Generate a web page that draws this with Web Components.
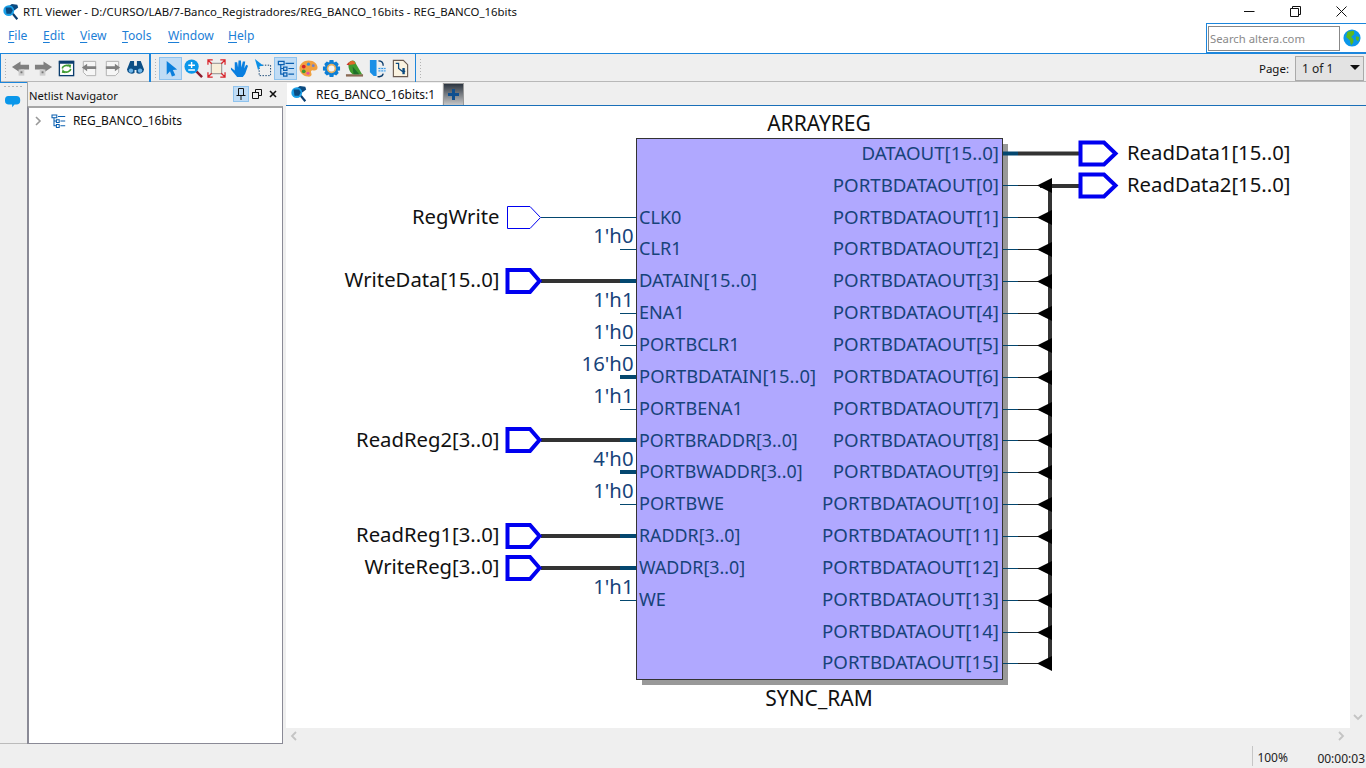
<!DOCTYPE html>
<html>
<head>
<meta charset="utf-8">
<title>RTL Viewer</title>
<style>
html, body { margin: 0; padding: 0; background: #efefef; overflow: hidden; }
body { font-family: "Noto Sans", "Open Sans", sans-serif; }
</style>
</head>
<body>
<rtl-app></rtl-app>
<script>
const ICONS = {
  app: `<path d="M8 3 L11 1 L17 2 L18 5 L14 8 L11 9Z" fill="#0b4a80"/><path d="M12 12 L17 18" stroke="#0b3d6e" stroke-width="2.4"/><circle cx="7.5" cy="8.5" r="6" fill="#1aa0e8"/><path d="M4 5 H10 L12 8 L10 12 H5Z" fill="#0b4a80"/>`,
  back: `<path d="M10 2.5 V6 H19 V11 H10 V14.5 L1 8.5Z" fill="#808080"/><rect x="8" y="11" width="6" height="6.5" fill="#cdcdcd"/><rect x="10" y="13" width="2" height="2" fill="#777"/>`,
  forward: `<path d="M10 2.5 V6 H1 V11 H10 V14.5 L19 8.5Z" fill="#808080"/><rect x="6" y="11" width="6" height="6.5" fill="#cdcdcd"/><rect x="8" y="13" width="2" height="2" fill="#777"/>`,
  refresh: `<rect x="2.5" y="2.5" width="15" height="15" fill="#fff" stroke="#0b3d6e" stroke-width="1.4"/><rect x="2" y="2" width="16" height="3" fill="#0b3d6e"/><path d="M5.5 10 A4.5 4 0 0 1 12.5 7.5 M14.5 10.5 A4.5 4 0 0 1 7.5 13" fill="none" stroke="#3f9b2f" stroke-width="1.7"/><path d="M11 5.5 L15 6 L14 10Z M9 15 L5 14.5 L6 10.5Z" fill="#3f9b2f"/>`,
  docleft: `<path d="M3.5 2.5 H16.5 V17.5 H7 L3.5 14Z" fill="#f6f6f6" stroke="#b0b0b0"/><path d="M2 9 L7.5 5 V7.5 H17 V10.5 H7.5 V13Z" fill="#808080"/>`,
  docright: `<path d="M3.5 2.5 H16.5 V14 L13 17.5 H3.5Z" fill="#f6f6f6" stroke="#b0b0b0"/><path d="M18 9 L12.5 5 V7.5 H3 V10.5 H12.5 V13Z" fill="#808080"/>`,
  binoculars: `<path d="M4.5 2 H8.5 V7 H11.5 V2 H15.5 L19 11 A5 5 0 0 1 11 14.5 V11.5 H9 V14.5 A5 5 0 0 1 1 11Z" fill="#0c4f86"/><circle cx="5.2" cy="12.2" r="2.3" fill="#6fb6ea"/><circle cx="14.8" cy="12.2" r="2.3" fill="#6fb6ea"/>`,
  select: `<path d="M6 2 L17 11 L12.5 11.5 L15 17 L11.5 18.5 L9.5 13 L6 16.5Z" fill="#0a7fdc"/>`,
  zoom: `<path d="M12 12 L19 19" stroke="#8c1c2c" stroke-width="2.6"/><circle cx="8" cy="8" r="7.5" fill="#0a97ea"/><path d="M4.5 6.5 H11.5 M8 3.2 V9.5 M4.5 11.5 H11.5" stroke="#fff" stroke-width="1.5"/>`,
  fit: `<rect x="4.5" y="4.5" width="11" height="11" fill="#f7eeda" stroke="#8a8a8a"/><path d="M1 6 V1 H6 M1 1 L5 5 M14 1 H19 V6 M19 1 L15 5 M1 14 V19 H6 M1 19 L5 15 M14 19 H19 V14 M19 19 L15 15" fill="none" stroke="#d8232a" stroke-width="1.3"/>`,
  hand: `<path d="M1 9 L5 12 L5 3.5 H7.5 L8.5 9 L9 1.5 H11.5 L12 9 L13.5 2.5 H16 L15 10 L17 6 L19 7 L16 15.5 L13.5 19 H7.5 L1 11Z" fill="#0a7fe0"/>`,
  seldot: `<rect x="6.5" y="6.5" width="12" height="11" fill="none" stroke="#0b3d6e" stroke-dasharray="1.5 1.5"/><path d="M2 0 L11 7 L7 7.5 L5.5 12Z" fill="#0a8fe6"/>`,
  hier: `<path d="M2.5 2.5 H8.5 V6 H2.5Z M8 8.5 H11.5 V12 H8Z M8 14.5 H11.5 V18 H8Z" fill="none" stroke="#0a5fb0" stroke-width="1.3"/><path d="M5 6 V16 H8 M5 10 H8 M10 4.5 H19 M13 10 H19 M13 16 H19" fill="none" stroke="#0a5fb0" stroke-width="1.3"/>`,
  palette: `<path d="M10 1.5 C16 1.5 19.5 5 19.5 9 C19.5 12 17 12.5 15 12 C13 11.6 12 13 13 15 C14 17.5 12 19 9 18.5 C4 18 .5 14 .5 10 C.5 5 5 1.5 10 1.5Z" fill="#f0a040"/><circle cx="5" cy="8" r="2" fill="#d8232a"/><circle cx="10" cy="5.5" r="1.7" fill="#2f8fe0"/><circle cx="15" cy="7" r="1.5" fill="#6a7fd0"/><circle cx="5" cy="13" r="2" fill="#3f9b2f"/><circle cx="9.5" cy="15" r="1.6" fill="#e84fa0"/>`,
  gear: `<path d="M8 1 H12 L12.5 3.8 L15 2.7 L17.6 5.2 L16.3 7.8 L19 8 V12 L16.3 12.3 L17.6 14.8 L15 17.3 L12.5 16.2 L12 19 H8 L7.5 16.2 L5 17.3 L2.4 14.8 L3.7 12.3 L1 12 V8 L3.7 7.8 L2.4 5.2 L5 2.7 L7.5 3.8Z" fill="#0d7fd6"/><circle cx="10" cy="10" r="5" fill="#e8b060"/><circle cx="10" cy="10" r="3.2" fill="#f4f4f4"/>`,
  bird: `<path d="M1 16 H19 V18.5 H1Z" fill="#8a6a54"/><path d="M4 4 C7 0 11 1 11.5 5 L18 16 L8 16 C4 13 3 8 4 4Z" fill="#3f9b2f"/><path d="M4 4 C6 1 10 1 11 5 C9 6 6 6 4 6Z" fill="#e0682a"/><path d="M4 3.5 L1.5 6 L4.5 6.5Z" fill="#c8342a"/><path d="M8 8 L15 16 H9Z" fill="#1f6f2a"/>`,
  split: `<path d="M2 1 H9 V18 H6 L2 14Z" fill="#1a8fe6"/><path d="M11 2 C14 2 16 4 16 7" fill="none" stroke="#0b3d6e" stroke-width="1.4"/><path d="M11 8.5 H18.5 V14 H11Z" fill="#cfe6f8"/><path d="M11 10 H18.5 M11 12.5 H18.5" stroke="#2a8fe0" stroke-dasharray="2 1"/><path d="M10 18.5 C13 19 15.5 18 16 15.5" fill="none" stroke="#0b3d6e" stroke-width="1.4"/>`,
  docsch: `<path d="M2.5 1.5 H13 L17.5 6 V18.5 H2.5Z" fill="#fbf3e0" stroke="#6a5a50" stroke-width="1.2"/><path d="M5 4.5 H8 V10 L12 13 H15" fill="none" stroke="#0b4a80" stroke-width="1.3"/><rect x="12" y="9.5" width="2.5" height="6.5" fill="#0b4a80"/>`,
  bubble: `<path d="M3.5 2 H12 Q16 2 16 6 V7 Q16 11 12 11 H10 L7.5 14 V11 H4 Q0 11 0 7 V6 Q0 2 3.5 2Z" fill="#0a97ea"/>`,
  globe: `<circle cx="10" cy="10" r="9.5" fill="#0a97ea"/><path d="M5 3 L12 2 L12.5 5.5 L9 9 L11.5 11 L11.5 15 L9 18 L7.5 12.5 L3.5 9Z M14.5 8 L18 9 L17 13.5 L14.5 12Z" fill="#5cb81e"/>`
};
const svgIcon = (name, size = 20) => `<svg width="${size}" height="${size}" viewBox="0 0 20 20">${ICONS[name]}</svg>`;

// small base so each element only declares its markup
class Shadowed extends HTMLElement {
  constructor() {
    super();
    this.attachShadow({ mode: 'open' });
    this.shadowRoot.innerHTML = this.render();
  }
  render() { return ''; }
}

class TitleBar extends Shadowed {
  render() {
    return `<style>
    :host { display: flex; align-items: center; height: 23px; background: #fff; font-size: 11.4px; color: #111; }
    .icon { margin-left: 2px; width: 21px; display: flex; }
    .title { flex: 1; white-space: nowrap; }
    .ctl { width: 46px; height: 23px; display: flex; align-items: center; justify-content: center; }
    .ctls { display: flex; padding-right: 2px; }
    </style>
    <div class="icon">${svgIcon('app', 18)}</div>
    <div class="title"><slot></slot></div>
    <div class="ctls">
      <div class="ctl"><svg width="11" height="11"><path d="M0 5.5H10.5" stroke="#111"/></svg></div>
      <div class="ctl"><svg width="11" height="11"><path d="M.5 2.5H8.5V10.5H.5Z M2.5 2.5V.5H10.5V8.5H8.5" fill="none" stroke="#111"/></svg></div>
      <div class="ctl"><svg width="11" height="11"><path d="M.5 .5L10.5 10.5M10.5 .5L.5 10.5" stroke="#111"/></svg></div>
    </div>`;
  }
}

class MenuBar extends Shadowed {
  render() {
    const items = [['F', 'ile'], ['E', 'dit'], ['V', 'iew'], ['T', 'ools'], ['W', 'indow'], ['H', 'elp']];
    return `<style>
    :host { display: flex; align-items: flex-start; height: 30px; background: #fff; font-size: 12.1px; color: #1c7ed6; }
    .menus { flex: 1; display: grid; grid-template-columns: 35px 37px 42px 46px 60px auto; padding: 4px 0 0 8px; }
    u { text-underline-offset: 2px; }
    .search { width: 158px; height: 28px; border: 1px solid #1c86dc; border-right: 0; display: flex; align-items: center; padding-left: 1px; }
    .box { width: 129px; height: 23px; border: 1px solid #888; background: #fff; color: #8a8a8a; font-size: 11.3px; line-height: 24px; padding-left: 1px; }
    .globe { display: flex; margin-left: 3px; }
    </style>
    <div class="menus">${items.map(i => `<span><u>${i[0]}</u>${i[1]}</span>`).join('')}</div>
    <div class="search"><div class="box">Search altera.com</div><div class="globe">${svgIcon('globe', 18)}</div></div>`;
  }
}

class TbButton extends Shadowed {
  render() {
    const on = this.hasAttribute('on');
    return `<style>
    :host { display: flex; width: 23px; height: 24px; align-items: center; justify-content: center; }
    .b { width: 23px; height: 23px; display: flex; align-items: center; justify-content: center; box-sizing: border-box;
      ${on ? 'background: #c0dcf5; border: 1px solid #8fc3ee;' : ''} }
    </style>
    <div class="b">${svgIcon(this.getAttribute('icon'), 19)}</div>`;
  }
}

class TbSection extends Shadowed {
  render() {
    return `<style>
    :host { display: flex; align-items: center; box-sizing: border-box; height: 29px; border-top: 1px solid #1c86dc; border-left: 1px solid #1c86dc; border-right: 1px solid #1c86dc; padding-left: 8px; position: relative; }
    :host([open]) { border-left: 0; border-right: 0; flex: 1; padding-left: 0; }
    .grip { position: absolute; left: 3px; top: 4px; bottom: 3px; width: 3px; background-image: radial-gradient(circle, #b4b4b4 1px, transparent 1px); background-size: 3px 3px; }
    </style>
    <div class="grip"></div><slot></slot>`;
  }
}

class ToolBar extends Shadowed {
  render() {
    return `<style>
    :host { display: flex; height: 29px; background: #efefef; box-shadow: inset 0 -1px 0 #b8b8b8; }
    </style>
    <slot></slot>`;
  }
}

class PageBox extends Shadowed {
  render() {
    return `<style>
    :host { display: flex; margin-left: auto; align-items: center; font-size: 11.5px; color: #111; padding-right: 2px; height: 27px; }
    .drop { margin-left: 6px; width: 69px; height: 25px; box-sizing: border-box; border: 1px solid #aaa; background: #e3e3e3; padding-left: 6px; line-height: 24px; position: relative; color: #222; font-size: 12px; }
    .drop::after { content: ''; position: absolute; right: 3px; top: 8px; border: 5px solid transparent; border-top: 5px solid #111; }
    </style>
    <span>Page:</span><div class="drop">1 of 1</div>`;
  }
}

class NetlistPanel extends Shadowed {
  render() {
    return `<style>
    :host { display: flex; width: 257px; flex-direction: column; box-sizing: border-box; height: 662px; font-size: 11.2px; color: #111; }
    .head { height: 24px; display: flex; align-items: center; padding-left: 1px; border-left: 1px solid #a9a9a9; box-sizing: border-box; }
    .name { flex: 1; padding-top: 2px; }
    .pin { width: 16px; height: 16px; background: #c0dcf5; border: 1px solid #8fc3ee; box-sizing: border-box; display: flex; align-items: center; justify-content: center; }
    .act { width: 16px; height: 16px; display: flex; align-items: center; justify-content: center; }
    .tree { flex: 1; background: #fff; border: 1px solid #8a8a96; border-left-width: 2px; border-top: 2px solid #a6a6a6; box-sizing: border-box; padding: 4px 0 0 6px; display: flex; font-size: 12px; }
    .row { display: flex; align-items: center; height: 17px; }
    .lab { margin-left: 7px; }
    .chev { margin-right: 8px; display: flex; }
    </style>
    <div class="head"><span class="name">Netlist Navigator</span>
      <div class="pin"><svg width="10" height="12"><path d="M2.5 .5H7.5V7.5H2.5Z M.5 7.5H9.5 M5 8V12" fill="none" stroke="#111"/></svg></div>
      <div class="act"><svg width="10" height="10"><path d="M.5 3.5H6.5V9.5H.5Z M3.5 3V.5H9.5V6.5H7" fill="none" stroke="#111"/><path d="M0 3.5H7" stroke="#111"/></svg></div>
      <div class="act" style="margin-right:2px"><svg width="8" height="8"><path d="M1 1L7 7M7 1L1 7" stroke="#111" stroke-width="1.6"/></svg></div>
    </div>
    <div class="tree"><div class="row">
      <span class="chev"><svg width="7" height="10"><path d="M1 1L5 5L1 9" fill="none" stroke="#999" stroke-width="1.6"/></svg></span>
      ${svgIcon('hier', 16)}<span class="lab">REG_BANCO_16bits</span>
    </div></div>`;
  }
}

class LeftStrip extends Shadowed {
  render() {
    return `<style>
    :host { display: block; width: 27px; height: 662px; box-sizing: border-box; border-top: 1px solid #1c86dc; border-bottom: 1px solid #bbb; }
    .grip { height: 3px; margin: 2px 3px 0; background-image: radial-gradient(circle, #b4b4b4 1px, transparent 1px); background-size: 4px 3px; }
    .i { padding: 6px 0 0 5px; }
    </style>
    <div class="grip"></div><div class="i">${svgIcon('bubble', 19)}</div>`;
  }
}

class TabStrip extends Shadowed {
  render() {
    return `<style>
    :host { display: flex; height: 24px; box-sizing: border-box; border-bottom: 1px solid #1a6fb8; padding-left: 1px; font-size: 12px; color: #111; }
    .tab { width: 155px; height: 22px; margin-top: 1px; background: #fff; display: flex; align-items: center; padding-left: 3px; box-sizing: border-box; }
    .tab span { margin-left: 8px; }
    .add { margin-left: 1px; width: 21px; height: 22px; margin-top: 1px; box-sizing: border-box; border: 1px solid #9a9a9a; border-bottom: 0; background: linear-gradient(#2c3540, #c6c6c6); display: flex; align-items: center; justify-content: center; }
    </style>
    <div class="tab">${svgIcon('app', 18)}<span>REG_BANCO_16bits:1</span></div>
    <div class="add"><svg width="11" height="11"><path d="M5.5 0V11M0 5.5H11" stroke="#0f4f8f" stroke-width="3"/></svg></div>`;
  }
}

class RtlCanvas extends Shadowed {
  render() {
    const left = [
      ['CLK0', 217, 'pin', 'RegWrite'], ['CLR1', 249, 'c', "1'h0"], ['DATAIN[15..0]', 281, 'bus', 'WriteData[15..0]'],
      ['ENA1', 313, 'c', "1'h1"], ['PORTBCLR1', 345, 'c', "1'h0"], ['PORTBDATAIN[15..0]', 377, 'cb', "16'h0"],
      ['PORTBENA1', 409, 'c', "1'h1"], ['PORTBRADDR[3..0]', 440, 'bus', 'ReadReg2[3..0]'], ['PORTBWADDR[3..0]', 472, 'cb', "4'h0"],
      ['PORTBWE', 504, 'c', "1'h0"], ['RADDR[3..0]', 536, 'bus', 'ReadReg1[3..0]'], ['WADDR[3..0]', 568, 'bus', 'WriteReg[3..0]'],
      ['WE', 600, 'c', "1'h1"]
    ];
    const ys = [185, 217, 249, 281, 313, 345, 377, 409, 440, 472, 504, 536, 568, 600, 632, 663];
    const BLUE = '#17437a', WIRE = '#333', TEAL = '#04476f';
    let s = '';
    const txt = (x, y, t, anchor, fill, cls = 'lbl') => `<text class="${cls}" x="${x}" y="${y}" text-anchor="${anchor}" fill="${fill}">${t}</text>`;
    const pinShape = (x1, sh, tip, y, h, w) => `<path d="M${x1} ${y - h}H${sh}L${tip} ${y}L${sh} ${y + h}H${x1}Z" fill="#fff" stroke="#0000f0" stroke-width="${w}"/>`;
    // the row grid isn't even, top rows and 440 sit a pixel lower
    const base = y => y + (y < 220 || y === 440 ? 7 : 6);
    const portCls = p => p.includes('[3..0]') ? 'lbl narrow' : p.includes('[15..0]') ? 'lbl' : 'lbl plain';

    s += txt(819, 131, 'ARRAYREG', 'middle', '#111', 'cap');
    s += `<rect x="642" y="144" width="366" height="541" fill="#999"/>`;
    s += `<rect x="636.5" y="138.5" width="366" height="541" fill="#b0a8ff" stroke="#333"/>`;
    s += txt(819, 706, 'SYNC_RAM', 'middle', '#111', 'cap');

    for (const [port, y, kind, name] of left) {
      s += txt(639, base(y), port, 'start', BLUE, portCls(port));
      if (kind === 'pin') {
        s += `<path d="M541 ${y + .5}H636" stroke="${TEAL}"/>`;
        s += pinShape(507.5, 530, 540.5, y + .5, 11, 1);
        s += txt(499.5, base(y), name, 'end', '#111', 'big');
      } else if (kind === 'bus') {
        s += `<path d="M541 ${y}H620" stroke="${WIRE}" stroke-width="4"/><path d="M620 ${y}H636" stroke="${TEAL}" stroke-width="4"/>`;
        s += pinShape(507.5, 530, 539.5, y, 11, 4);
        s += txt(499.5, base(y), name, 'end', '#111', 'big');
      } else {
        s += kind === 'cb' ? `<path d="M620 ${y}H636" stroke="${TEAL}" stroke-width="4"/>` : `<path d="M620 ${y + .5}H636" stroke="${TEAL}"/>`;
        s += txt(633.5, y - 6, name, 'end', BLUE, 'big');
      }
    }

    // output side
    s += txt(999, 160, 'DATAOUT[15..0]', 'end', BLUE, 'lbl wide');
    s += `<path d="M1018 153.5H1080" stroke="${WIRE}" stroke-width="4"/><path d="M1003 153.5H1018" stroke="${TEAL}" stroke-width="4"/>`;
    s += `<path d="M1050 185V663" stroke="${WIRE}" stroke-width="4"/><path d="M1040 186H1080" stroke="${WIRE}" stroke-width="4"/>`;
    ys.forEach((y, i) => {
      s += txt(999, base(y), `PORTBDATAOUT[${i}]`, 'end', BLUE, 'lbl wide');
      s += `<path d="M1003 ${y + .5}H1018" stroke="${TEAL}"/><path d="M1018 ${y + .5}H1040" stroke="#222"/>`;
      s += `<path d="M1037 ${y + .5}L1052 ${y - 7}V${y + 8}Z" fill="#000"/>`;
    });
    s += pinShape(1080.5, 1104, 1115.5, 153.5, 11, 4) + pinShape(1080.5, 1104, 1115.5, 185.5, 11, 4);
    s += txt(1127, 160, 'ReadData1[15..0]', 'start', '#111', 'big');
    s += txt(1127, 192, 'ReadData2[15..0]', 'start', '#111', 'big');

    return `<style>
    :host { display: block; width: 1064px; height: 622px; background: #fff; }
    svg { display: block; }
    text { font-family: "Noto Sans", "Open Sans", sans-serif; }
    .lbl { font-size: 18.4px; }
    .plain { font-size: 18.1px; }
    .narrow { font-size: 17.85px; }
    .wide { font-size: 18.7px; }
    .big { font-size: 20.3px; }
    .cap { font-size: 21px; }
    </style>
    <svg width="1064" height="622" viewBox="286 106 1064 622">${s}</svg>`;
  }
}

class StatusBar extends Shadowed {
  render() {
    return `<style>
    :host { display: flex; height: 24px; align-items: center; justify-content: flex-end; font-size: 12px; color: #222; background: #efefef; padding-right: 1px; box-sizing: border-box; }
    .z { border-left: 1px solid #c6c6c6; height: 20px; line-height: 24px; padding-left: 4px; width: 60px; }
    </style>
    <div class="z">100%</div><div style="padding-top:4px">00:00:03</div>`;
  }
}

class RtlApp extends Shadowed {
  render() {
    return `<style>
    :host { display: block; width: 1366px; height: 768px; background: #efefef; overflow: hidden; }
    .body { display: flex; height: 662px; }
    .main { margin-left: 3px; width: 1080px; display: flex; flex-direction: column; }
    .view { display: flex; height: 622px; }
    .vscroll { width: 16px; display: flex; align-items: flex-end; justify-content: center; padding-bottom: 7px; box-sizing: border-box; }
    .hscroll { height: 16px; display: flex; align-items: center; justify-content: space-between; padding: 0 21px 0 4px; }
    </style>
    <title-bar>RTL Viewer - D:/CURSO/LAB/7-Banco_Registradores/REG_BANCO_16bits - REG_BANCO_16bits</title-bar>
    <menu-bar></menu-bar>
    <tool-bar>
      <tb-section style="width:150px">
        <tb-button icon="back"></tb-button><tb-button icon="forward"></tb-button><tb-button icon="refresh"></tb-button>
        <tb-button icon="docleft"></tb-button><tb-button icon="docright"></tb-button><tb-button icon="binoculars"></tb-button>
      </tb-section>
      <tb-section style="width:266px">
        <tb-button icon="select" on></tb-button><tb-button icon="zoom"></tb-button><tb-button icon="fit"></tb-button>
        <tb-button icon="hand"></tb-button><tb-button icon="seldot"></tb-button><tb-button icon="hier" on></tb-button>
        <tb-button icon="palette"></tb-button><tb-button icon="gear"></tb-button><tb-button icon="bird"></tb-button>
        <tb-button icon="split"></tb-button><tb-button icon="docsch"></tb-button>
      </tb-section>
      <tb-section open><page-box></page-box></tb-section>
    </tool-bar>
    <div class="body">
      <left-strip></left-strip>
      <netlist-panel></netlist-panel>
      <div class="main">
        <tab-strip></tab-strip>
        <div class="view">
          <rtl-canvas></rtl-canvas>
          <div class="vscroll"><svg width="10" height="7"><path d="M1 1L5 5L9 1" fill="none" stroke="#c4c4c4" stroke-width="1.8"/></svg></div>
        </div>
        <div class="hscroll">
          <svg width="7" height="10"><path d="M6 1L2 5L6 9" fill="none" stroke="#c4c4c4" stroke-width="1.8"/></svg>
          <svg width="7" height="10"><path d="M1 1L5 5L1 9" fill="none" stroke="#c4c4c4" stroke-width="1.8"/></svg>
        </div>
      </div>
    </div>
    <status-bar></status-bar>`;
  }
}

customElements.define('title-bar', TitleBar);
customElements.define('menu-bar', MenuBar);
customElements.define('tb-button', TbButton);
customElements.define('tb-section', TbSection);
customElements.define('tool-bar', ToolBar);
customElements.define('page-box', PageBox);
customElements.define('netlist-panel', NetlistPanel);
customElements.define('left-strip', LeftStrip);
customElements.define('tab-strip', TabStrip);
customElements.define('rtl-canvas', RtlCanvas);
customElements.define('status-bar', StatusBar);
customElements.define('rtl-app', RtlApp);
</script>
</body>
</html>
